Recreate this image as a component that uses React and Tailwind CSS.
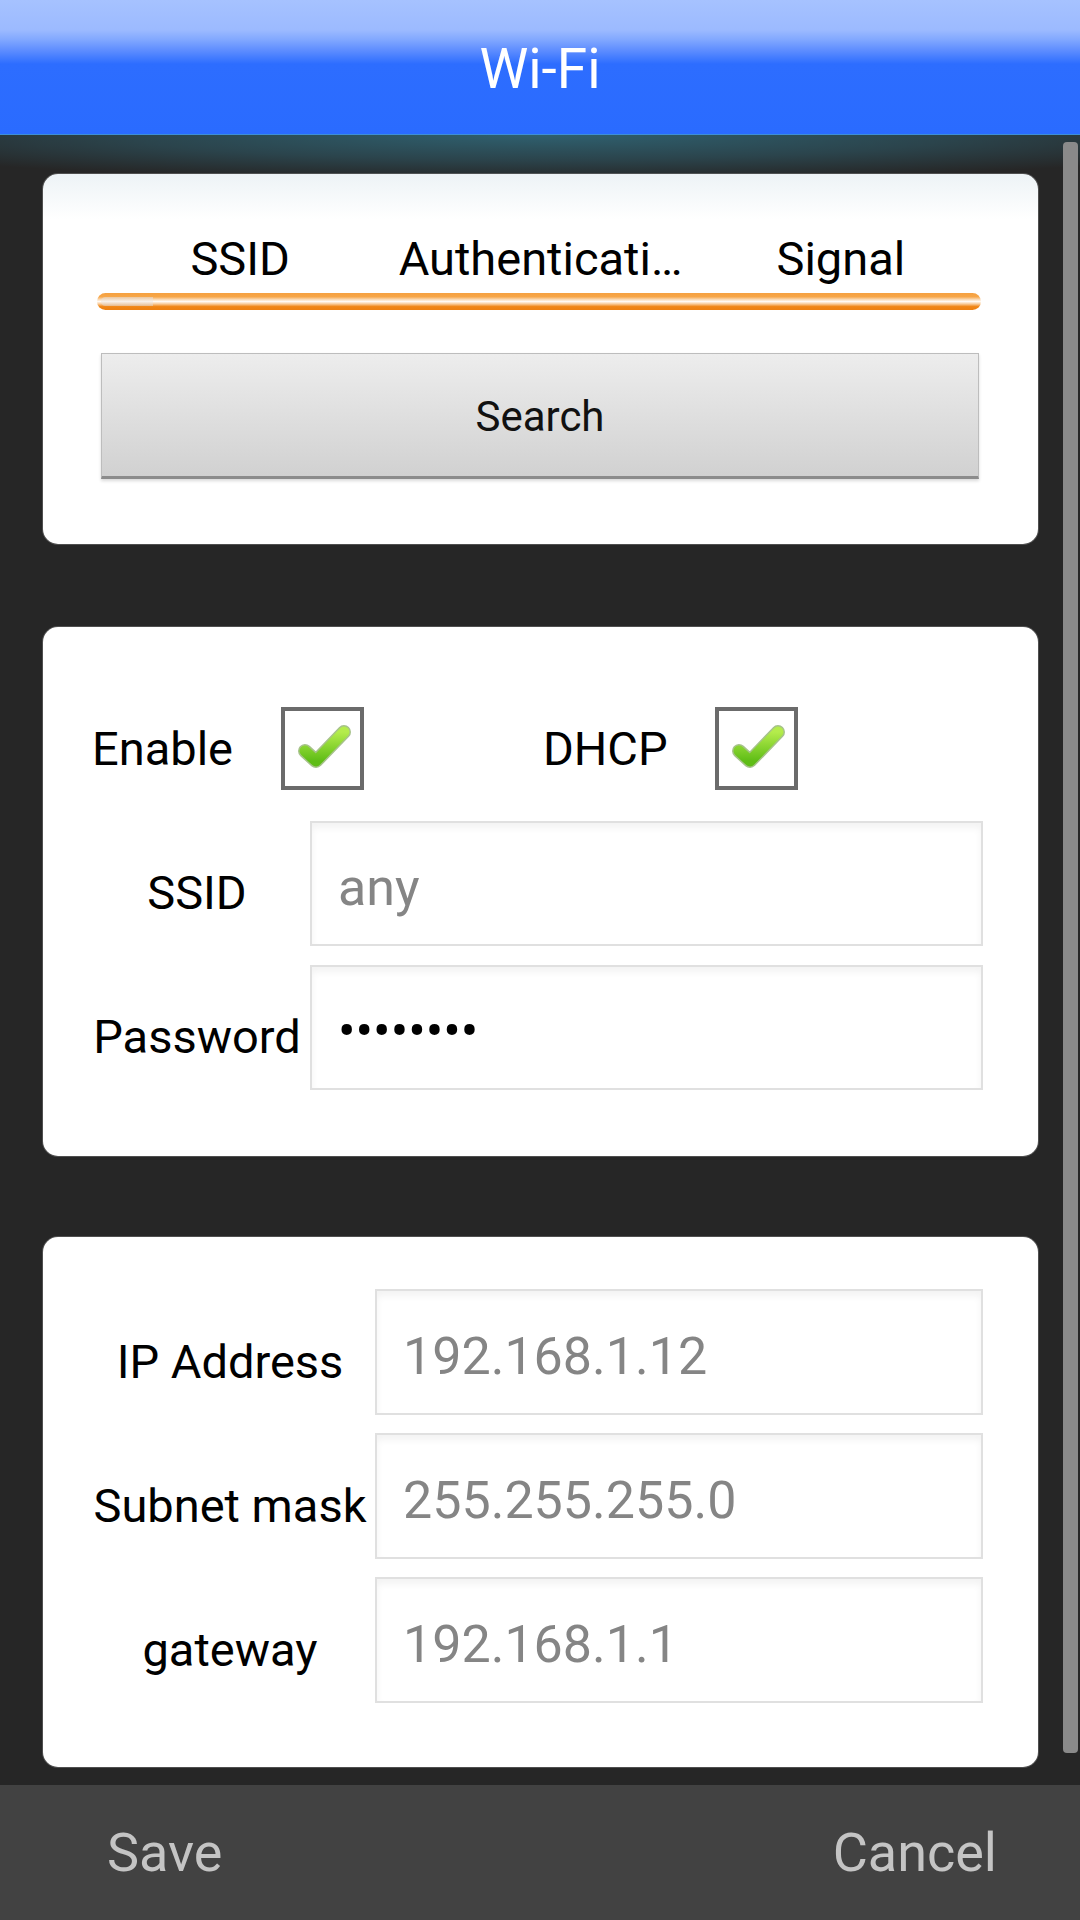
import React from "react";

const font = { fontFamily: "Roboto, 'Noto Sans', 'Liberation Sans', sans-serif" };

function Check() {
  return (
    <div className="w-[83px] h-[83px] border-[4px] border-[#6b6b6b] bg-white shrink-0">
      <svg width="75" height="75" viewBox="0 0 75 75">
        <defs>
          <linearGradient id="g" x1="0" y1="0" x2="0" y2="1">
            <stop offset="0" stopColor="#b4ec4c" />
            <stop offset="1" stopColor="#5fbd16" />
          </linearGradient>
        </defs>
        <path d="M20 40 L31 50 L59 21" fill="none" stroke="#5c8f2a" strokeOpacity="0.55" strokeWidth="14" strokeLinecap="round" strokeLinejoin="round" />
        <path d="M20 40 L31 50 L59 21" fill="none" stroke="url(#g)" strokeWidth="11" strokeLinecap="round" strokeLinejoin="round" />
      </svg>
    </div>
  );
}

function Field({ value, color = "text-[#858585]", w, h = "h-[125px]" }) {
  return (
    <div className={`${w} ${h} border-2 border-[#e0e0e0] bg-white shadow-[inset_0_5px_7px_rgba(0,0,0,0.05)] flex items-center pl-[26px] text-[52px] leading-[61px] ${color}`}>
      <span className="pt-[8px]">{value}</span>
    </div>
  );
}

export default function App() {
  return (
    <div style={font} className="w-[1080px] h-[1920px] flex flex-col bg-[#262626] overflow-hidden">
      {/* Header */}
      <div className="h-[135px] shrink-0 flex items-center justify-center border-b border-[#3d8fd8] bg-[linear-gradient(to_bottom,#a6c2ff_0px,#9cbaff_30px,#80a7ff_40px,#5f8eff_50px,#2d6dff_64px,#2a6bff_100%)]">
        <span className="text-white text-[55px] leading-[64px] mt-[4px]">Wi-Fi</span>
      </div>

      {/* Content */}
      <div className="relative flex-1 flex flex-col pl-[43px] bg-[#262626] bg-[radial-gradient(ellipse_70%_45px_at_50%_0px,#2f606f_0%,#2b444c_55%,#262626_100%)]">
        {/* Card 1 */}
        <div className="mt-[39px] w-[995px] h-[370px] rounded-[15px] bg-[linear-gradient(to_bottom,#edf3f6_0px,#ffffff_45px)] shadow-[0_0_0_1px_rgba(120,120,120,0.5)] flex flex-col pt-[57px]">
          <div className="grid grid-cols-3 px-[47px] text-[47px] leading-[55px] text-black text-center">
            <span>SSID</span>
            <span className="whitespace-nowrap">Authenticati…</span>
            <span>Signal</span>
          </div>
          <div className="mt-[7px] ml-[54px] mr-[57px] h-[17px] rounded-full relative bg-[linear-gradient(to_bottom,#f5a040_0%,#f7a647_22%,#fad8b2_38%,#fffaf4_50%,#f9cc9a_64%,#f08616_80%,#ee8010_100%)]">
            <div className="absolute left-[4px] top-[4px] bottom-[4px] w-[52px] rounded-l-full bg-[linear-gradient(to_bottom,#e6d2be,#f4ece4_50%,#e2c8ae)] opacity-70" />
          </div>
          <div className="mt-[43px] ml-[58px] mr-[59px] h-[126px] border border-[#bdbdbd] border-b-[3px] border-b-[#8c8c8c] bg-[linear-gradient(to_bottom,#ededed,#d1d1d1)] shadow-[0_2px_3px_rgba(0,0,0,0.15)] flex items-center justify-center">
            <span className="text-[42px] leading-[50px] text-[#111] mt-[4px]">Search</span>
          </div>
        </div>

        {/* Card 2 */}
        <div className="mt-[83px] w-[995px] h-[529px] rounded-[15px] bg-white shadow-[0_0_0_1px_rgba(120,120,120,0.5)] flex flex-col pt-[80px] pl-[49px]">
          <div className="flex items-center h-[83px] text-[47px] leading-[55px] text-black">
            <span className="w-[189px]">Enable</span>
            <Check />
            <span className="ml-[179px] w-[172px]">DHCP</span>
            <Check />
          </div>
          <div className="mt-[31px] flex items-baseline">
            <span className="w-[210px] text-center text-[47px] leading-[55px] text-black translate-y-[4px]">SSID</span>
            <div className="ml-[8px]">
              <Field value="any" w="w-[673px]" />
            </div>
          </div>
          <div className="mt-[19px] flex items-baseline">
            <span className="w-[210px] text-center text-[47px] leading-[55px] text-black whitespace-nowrap translate-y-[4px]">Password</span>
            <div className="ml-[8px]">
              <Field value="••••••••" color="text-black" w="w-[673px]" />
            </div>
          </div>
        </div>

        {/* Card 3 */}
        <div className="mt-[81px] w-[995px] h-[530px] rounded-[15px] bg-white shadow-[0_0_0_1px_rgba(120,120,120,0.5)] flex flex-col pt-[52px] pl-[49px]">
          {[
            ["IP Address", "192.168.1.12"],
            ["Subnet mask", "255.255.255.0"],
            ["gateway", "192.168.1.1"],
          ].map(([label, val], i) => (
            <div key={label} className={`flex items-baseline ${i > 0 ? "mt-[18px]" : ""}`}>
              <span className="w-[276px] text-center text-[47px] leading-[55px] text-black whitespace-nowrap translate-y-[4px]">{label}</span>
              <div className="ml-[7px]">
                <Field value={val} w="w-[608px]" h="h-[126px]" />
              </div>
            </div>
          ))}
        </div>

        {/* Scrollbar */}
        <div className="absolute right-[2px] top-[7px] w-[15px] h-[1611px] rounded-[4px] bg-[#8a8a8a]" />
      </div>

      {/* Bottom bar */}
      <div className="h-[135px] shrink-0 bg-[#424242] flex items-center justify-between pl-[107px] pr-[83px] text-[54px] leading-[63px] text-[#c4c4c4]">
        <span>Save</span>
        <span>Cancel</span>
      </div>
    </div>
  );
}
